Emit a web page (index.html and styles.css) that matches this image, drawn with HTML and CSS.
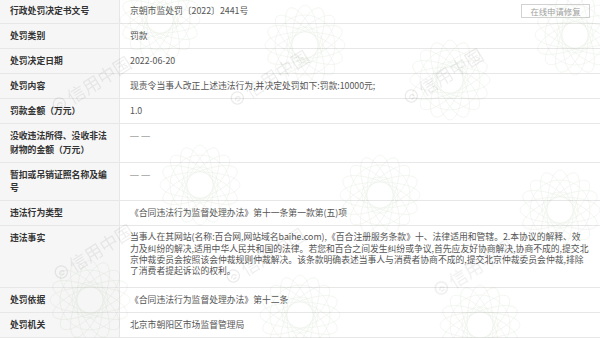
FILE: index.html
```html
<!DOCTYPE html>
<html lang="zh-CN">
<head>
<meta charset="utf-8">
<title>行政处罚信息</title>
<link rel="stylesheet" href="styles.css">
</head>
<body>
<div class="page">
  <div class="sheet">
    <div class="row">
      <div class="label">行政处罚决定书文号</div>
      <div class="value value-head"><span>京朝市监处罚〔2022〕2441号</span><button class="repair" type="button">在线申请修复</button></div>
    </div>
    <div class="row">
      <div class="label">处罚类别</div>
      <div class="value">罚款</div>
    </div>
    <div class="row">
      <div class="label">处罚决定日期</div>
      <div class="value">2022-06-20</div>
    </div>
    <div class="row">
      <div class="label">处罚内容</div>
      <div class="value">现责令当事人改正上述违法行为,并决定处罚如下:罚款:10000元;</div>
    </div>
    <div class="row">
      <div class="label">罚款金额（万元）</div>
      <div class="value">1.0</div>
    </div>
    <div class="row">
      <div class="label">没收违法所得、没收非法财物的金额（万元）</div>
      <div class="value"><span class="dash">— —</span></div>
    </div>
    <div class="row">
      <div class="label">暂扣或吊销证照名称及编号</div>
      <div class="value"><span class="dash">— —</span></div>
    </div>
    <div class="row">
      <div class="label">违法行为类型</div>
      <div class="value">《合同违法行为监督处理办法》第十一条第一款第(五)项</div>
    </div>
    <div class="row">
      <div class="label">违法事实</div>
      <div class="value fact"><span class="line">当事人在其网站(名称:百合网,网站域名baihe.com),《百合注册服务条款》十、法律适用和管辖。2.本协议的解释、效</span><span class="line">力及纠纷的解决,适用中华人民共和国的法律。若您和百合之间发生纠纷或争议,首先应友好协商解决,协商不成的,提交北</span><span class="line">京仲裁委员会按照该会仲裁规则仲裁解决。该条款明确表述当事人与消费者协商不成的,提交北京仲裁委员会仲裁,排除</span><span class="line">了消费者提起诉讼的权利。</span></div>
    </div>
    <div class="row">
      <div class="label">处罚依据</div>
      <div class="value">《合同违法行为监督处理办法》第十二条</div>
    </div>
    <div class="row">
      <div class="label">处罚机关</div>
      <div class="value">北京市朝阳区市场监督管理局</div>
    </div>
  </div>

  <div class="watermark" aria-hidden="true">
    <svg class="guilloche" width="600" height="338" viewBox="0 0 600 338">
      <defs>
        <g id="ros" fill="none" stroke="#8fb07f" stroke-width="0.45">
          <ellipse rx="40" ry="13"/>
          <ellipse rx="40" ry="13" transform="rotate(22.5)"/>
          <ellipse rx="40" ry="13" transform="rotate(45)"/>
          <ellipse rx="40" ry="13" transform="rotate(67.5)"/>
          <ellipse rx="40" ry="13" transform="rotate(90)"/>
          <ellipse rx="40" ry="13" transform="rotate(112.5)"/>
          <ellipse rx="40" ry="13" transform="rotate(135)"/>
          <ellipse rx="40" ry="13" transform="rotate(157.5)"/>
          <circle r="30"/>
          <circle r="18"/>
        </g>
      </defs>
      <g opacity="0.22">
        <use href="#ros" x="160" y="20"/>
        <use href="#ros" x="305" y="45"/>
        <use href="#ros" x="450" y="80"/>
        <use href="#ros" x="575" y="35"/>
        <use href="#ros" x="200" y="185"/>
        <use href="#ros" x="380" y="195"/>
        <use href="#ros" x="560" y="210"/>
        <use href="#ros" x="90" y="300"/>
        <use href="#ros" x="300" y="315"/>
        <use href="#ros" x="480" y="325"/>
      </g>
    </svg>
    <div class="wm wm-1"><svg class="wm-logo" viewBox="0 0 16 16"><circle cx="8" cy="8" r="6.5"/><path d="M5 9.5 Q8 4 11 9.5 M6 11 H10"/></svg><span>信用中国</span></div>
    <div class="wm wm-2"><svg class="wm-logo" viewBox="0 0 16 16"><circle cx="8" cy="8" r="6.5"/><path d="M5 9.5 Q8 4 11 9.5 M6 11 H10"/></svg><span>信用中国</span></div>
    <div class="wm wm-3"><svg class="wm-logo" viewBox="0 0 16 16"><circle cx="8" cy="8" r="6.5"/><path d="M5 9.5 Q8 4 11 9.5 M6 11 H10"/></svg><span>信用中国</span></div>
    <div class="wm wm-5"><svg class="wm-logo" viewBox="0 0 16 16"><circle cx="8" cy="8" r="6.5"/><path d="M5 9.5 Q8 4 11 9.5 M6 11 H10"/></svg><span>信用中国</span></div>
    <div class="wm wm-6"><svg class="wm-logo" viewBox="0 0 16 16"><circle cx="8" cy="8" r="6.5"/><path d="M5 9.5 Q8 4 11 9.5 M6 11 H10"/></svg><span>信用中国</span></div>
    <div class="wm wm-7"><svg class="wm-logo" viewBox="0 0 16 16"><circle cx="8" cy="8" r="6.5"/><path d="M5 9.5 Q8 4 11 9.5 M6 11 H10"/></svg><span>信用中国</span></div>
  </div>
</div>
</body>
</html>
```

FILE: styles.css
```css
* { box-sizing: border-box; }

body {
  margin: 0;
  background: #ffffff;
  font-family: "Noto Sans CJK SC", "Noto Sans", sans-serif;
}

.page {
  position: relative;
  width: 600px;
  height: 338px;
  overflow: hidden;
  background: #ffffff;
}

.sheet {
  margin-top: -1px;
}

.row {
  display: grid;
  grid-template-columns: 120px 1fr;
  border-bottom: 1px solid #e7e7e7;
}

.label {
  background: #f6f6f6;
  border-right: 1px solid #e7e7e7;
  padding: 5.25px 9px 5.25px 10px;
  font-size: 8.8px;
  line-height: 13.5px;
  font-weight: 700;
  color: #333333;
}

.value {
  padding: 5.25px 6px 5.25px 10px;
  font-size: 8.8px;
  line-height: 13.5px;
  color: #555555;
}

.value-head {
  display: flex;
  align-items: center;
  justify-content: space-between;
  padding-top: 5px;
  padding-bottom: 5px;
  padding-right: 8px;
}

.repair {
  width: 69px;
  height: 14px;
  margin-right: 2px;
  padding: 0;
  border: 1px solid #d2d2d2;
  background: #ffffff;
  color: #a0a0a0;
  font-family: "Noto Sans CJK SC", "Noto Sans", sans-serif;
  font-size: 8.4px;
  line-height: 12px;
}

.dash {
  font-family: "Liberation Sans", sans-serif;
  color: #777777;
}

.fact {
  line-height: 11.33px;
  padding-top: 5.4px;
  padding-bottom: 10.3px;
}

.line {
  display: block;
  white-space: nowrap;
}

.watermark {
  position: absolute;
  inset: 0;
  pointer-events: none;
}

.guilloche {
  position: absolute;
  left: 0;
  top: 0;
}

.wm {
  position: absolute;
  display: flex;
  align-items: center;
  gap: 3px;
  transform: rotate(-32deg);
  transform-origin: 0 100%;
  color: rgba(0, 0, 0, 0.065);
  font-size: 18px;
  line-height: 20px;
  font-family: "Noto Sans CJK SC", sans-serif;
  white-space: nowrap;
}

.wm-logo {
  width: 15px;
  height: 15px;
  fill: none;
  stroke: rgba(0, 0, 0, 0.08);
  stroke-width: 1.4;
}

.wm-1 { left: 58px; top: 96px; }
.wm-2 { left: 236px; top: 90px; }
.wm-3 { left: 410px; top: 88px; }
.wm-5 { left: 60px; top: 264px; }
.wm-6 { left: 232px; top: 268px; }
.wm-7 { left: 440px; top: 280px; }
```
